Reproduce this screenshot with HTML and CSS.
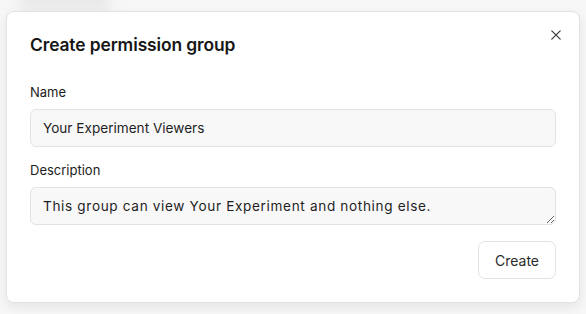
FILE: index.html
```html
<!DOCTYPE html>
<html>
<head>
<meta charset="utf-8">
<link rel="stylesheet" href="styles.css">
</head>
<body>
<div class="ghost"></div>
<div class="dialog">
  <button class="close" aria-label="Close">
    <svg width="12" height="12" viewBox="0 0 12 12"><path d="M1.8 1.8 L10.2 10.2 M10.2 1.8 L1.8 10.2" stroke="#3a3a3a" stroke-width="1.2" stroke-linecap="round"/></svg>
  </button>
  <h2 class="title">Create permission group</h2>
  <div class="field">
    <label class="label">Name</label>
    <input class="input" type="text" value="Your Experiment Viewers">
  </div>
  <div class="field">
    <label class="label">Description</label>
    <textarea class="input textarea" rows="1">This group can view Your Experiment and nothing else.</textarea>
  </div>
  <div class="actions">
    <button class="btn">Create</button>
  </div>
</div>
</body>
</html>
```
FILE: styles.css
```css
html, body {
  margin: 0;
  padding: 0;
  background: #f7f7f7;
  font-family: Inter, "Noto Sans", sans-serif;
}
body {
  padding: 11px 6px 0 6px;
  height: 314px;
  box-sizing: border-box;
  position: relative;
  overflow: hidden;
}
.ghost {
  position: absolute;
  left: 20px;
  top: -10px;
  width: 90px;
  height: 22px;
  border-radius: 8px;
  background: #e9e9e9;
  filter: blur(6px);
}
.dialog {
  position: relative;
  width: 574px;
  height: 292px;
  box-sizing: border-box;
  background: #fff;
  border: 1px solid #e3e3e3;
  border-radius: 8px;
  box-shadow: 0 4px 12px rgba(0,0,0,0.08);
  padding: 21px 23px 23px 23px;
  display: flex;
  flex-direction: column;
}
.close {
  position: absolute;
  top: 17px;
  right: 17px;
  width: 12px;
  height: 12px;
  padding: 0;
  border: 0;
  background: none;
  display: flex;
}
.title {
  margin: 0 0 27px 0;
  font-size: 17.4px;
  line-height: 24px;
  font-weight: 600;
  color: #161616;
  letter-spacing: -0.1px;
}
.field {
  display: flex;
  flex-direction: column;
  gap: 9px;
  margin-bottom: 15px;
}
.label {
  font-size: 13px;
  line-height: 16px;
  font-weight: 400;
  color: #1d1d1d;
}
.input {
  box-sizing: border-box;
  height: 38px;
  width: 100%;
  border: 1px solid #e2e2e2;
  border-radius: 6px;
  background: #f8f8f8;
  padding: 0 12px;
  font-family: Inter, "Noto Sans", sans-serif;
  font-size: 13.6px;
  color: #1f1f1f;
  outline: none;
}
.textarea {
  display: block;
  resize: vertical;
  padding: 9px 12px;
  line-height: 18px;
  overflow: hidden;
  letter-spacing: 0.65px;
}
.field + .field { margin-bottom: 16px; }
.actions {
  display: flex;
  justify-content: flex-end;
}
.btn {
  height: 38px;
  padding: 0 16px;
  box-sizing: border-box;
  border: 1px solid #e2e2e2;
  border-radius: 7px;
  background: #fff;
  font-family: Inter, "Noto Sans", sans-serif;
  font-size: 14px;
  color: #2a2a2a;
}
```
